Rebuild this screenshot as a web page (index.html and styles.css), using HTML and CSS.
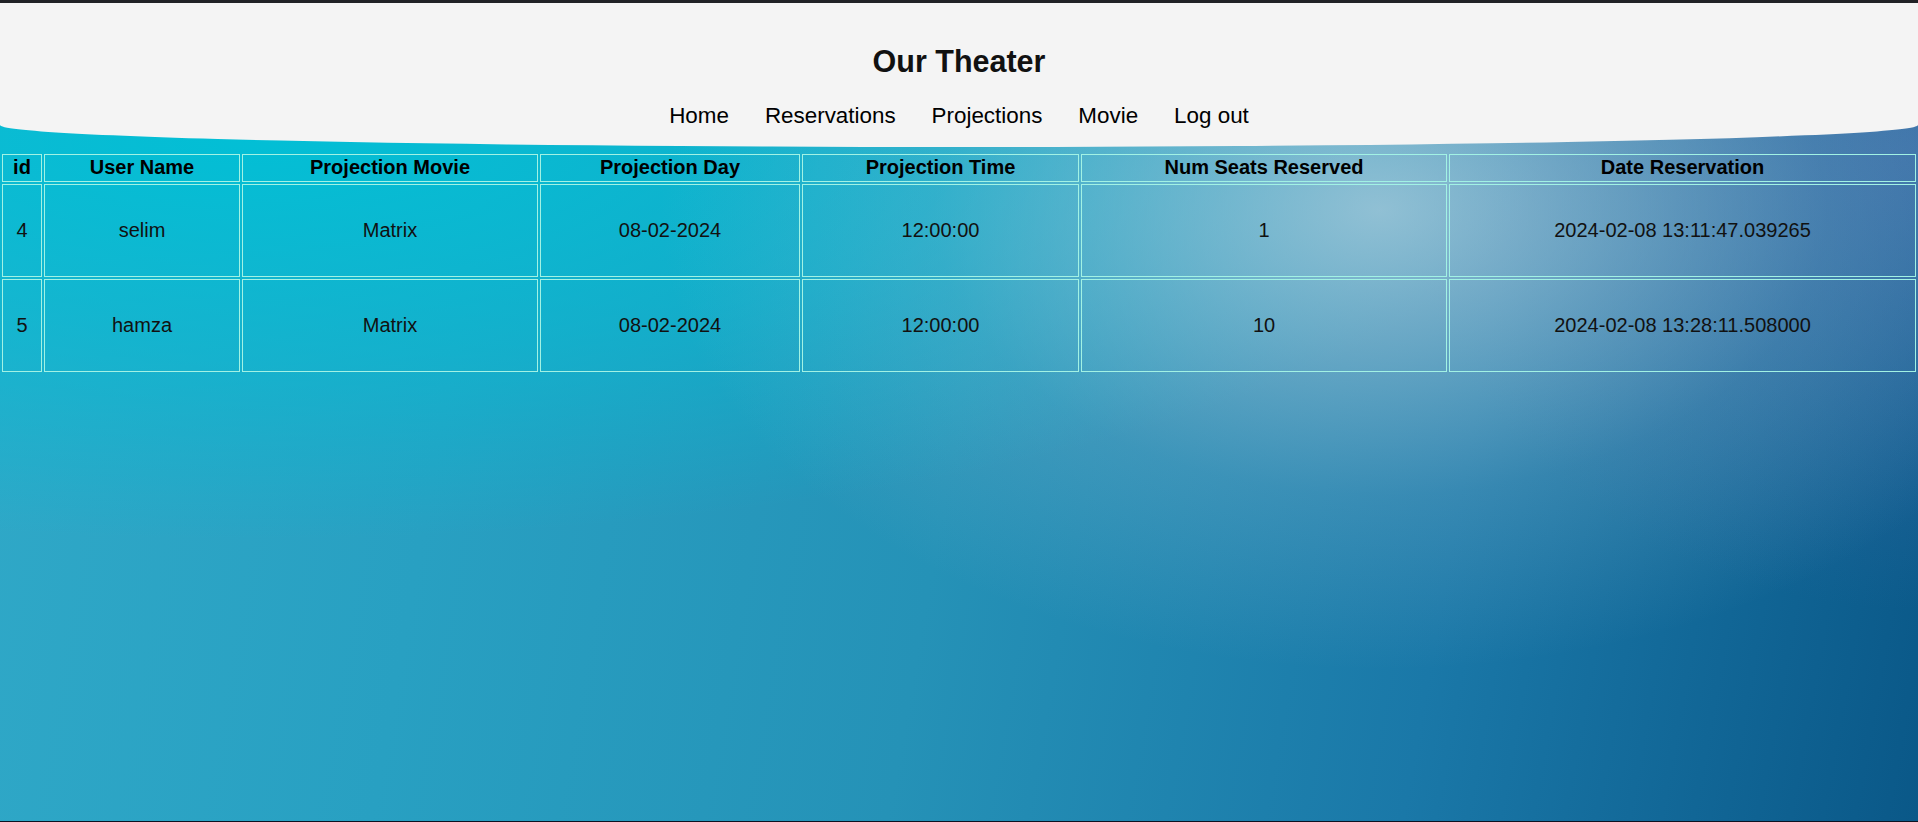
FILE: index.html
```html
<!DOCTYPE html>
<html lang="en">
<head>
<meta charset="utf-8">
<title>Our Theater - Reservations</title>
<link rel="stylesheet" href="styles.css">
</head>
<body class="page">
  <header class="site-header">
    <h1 class="site-title">Our Theater</h1>
    <nav class="site-nav">
      <a class="nav-link" href="#">Home</a>
      <a class="nav-link" href="#">Reservations</a>
      <a class="nav-link" href="#">Projections</a>
      <a class="nav-link" href="#">Movie</a>
      <a class="nav-link" href="#">Log out</a>
    </nav>
  </header>
  <main class="content">
    <table class="res-table">
      <thead>
        <tr>
          <th class="col-id">id</th>
          <th class="col-user">User Name</th>
          <th class="col-movie">Projection Movie</th>
          <th class="col-day">Projection Day</th>
          <th class="col-time">Projection Time</th>
          <th class="col-seats">Num Seats Reserved</th>
          <th class="col-date">Date Reservation</th>
        </tr>
      </thead>
      <tbody>
        <tr>
          <td>4</td>
          <td>selim</td>
          <td>Matrix</td>
          <td>08-02-2024</td>
          <td>12:00:00</td>
          <td>1</td>
          <td>2024-02-08 13:11:47.039265</td>
        </tr>
        <tr>
          <td>5</td>
          <td>hamza</td>
          <td>Matrix</td>
          <td>08-02-2024</td>
          <td>12:00:00</td>
          <td>10</td>
          <td>2024-02-08 13:28:11.508000</td>
        </tr>
      </tbody>
    </table>
  </main>
</body>
</html>
```

FILE: styles.css
```css
html {
  height: 100%;
}

.page {
  margin: 0;
  min-height: 100vh;
  box-sizing: border-box;
  border-top: 3px solid #202226;
  border-bottom: 1px solid #0c1222;
  font-family: "Liberation Sans", Arial, sans-serif;
  color: #111;
  background-color: #1a86b2;
  background-image:
    radial-gradient(ellipse 720px 460px at 1380px 210px, rgba(178, 208, 222, 0.78) 0%, rgba(170, 204, 220, 0.55) 28%, rgba(160, 198, 218, 0.22) 62%, rgba(160, 198, 218, 0) 100%),
    radial-gradient(ellipse 1300px 400px at 250px 140px, rgba(0, 192, 214, 0.95) 0%, rgba(0, 192, 214, 0.5) 55%, rgba(0, 192, 214, 0) 100%),
    radial-gradient(ellipse 520px 460px at 1918px 150px, rgba(62, 110, 170, 0.8) 0%, rgba(62, 110, 170, 0) 100%),
    linear-gradient(100deg, #30a9c8 0%, #28a0c2 25%, #2592b7 50%, #1a78a8 75%, #0a5888 100%);
  background-repeat: no-repeat;
}

.site-header {
  background: #f4f4f4;
  text-align: center;
  padding: 41px 0 18px;
  border-radius: 0 0 50% 50% / 0 0 22px 22px;
}

.site-title {
  margin: 0;
  font-size: 30.5px;
  line-height: 35px;
  font-weight: bold;
  color: #111;
}

.site-nav {
  margin-top: 24px;
  display: flex;
  justify-content: center;
  gap: 36px;
  font-size: 22.4px;
  line-height: 26px;
}

.nav-link {
  color: #000;
  text-decoration: none;
}

.content {
  margin-top: 5px;
}

.res-table {
  width: 100%;
  table-layout: fixed;
  border-collapse: separate;
  border-spacing: 2px;
  text-align: center;
}

.res-table th,
.res-table td {
  border: 1px solid #a2f2e4;
  box-sizing: border-box;
}

.res-table th {
  font-size: 20px;
  line-height: 23px;
  font-weight: bold;
  padding: 1px 1px 2px;
  color: #000;
}

.res-table td {
  font-size: 20px;
  line-height: 23px;
  padding: 34px 1px;
  color: #111;
}

.col-id { width: 40px; }
.col-user { width: 196px; }
.col-movie { width: 296px; }
.col-day { width: 260px; }
.col-time { width: 277px; }
.col-seats { width: 366px; }
.col-date { width: 467px; }
```
